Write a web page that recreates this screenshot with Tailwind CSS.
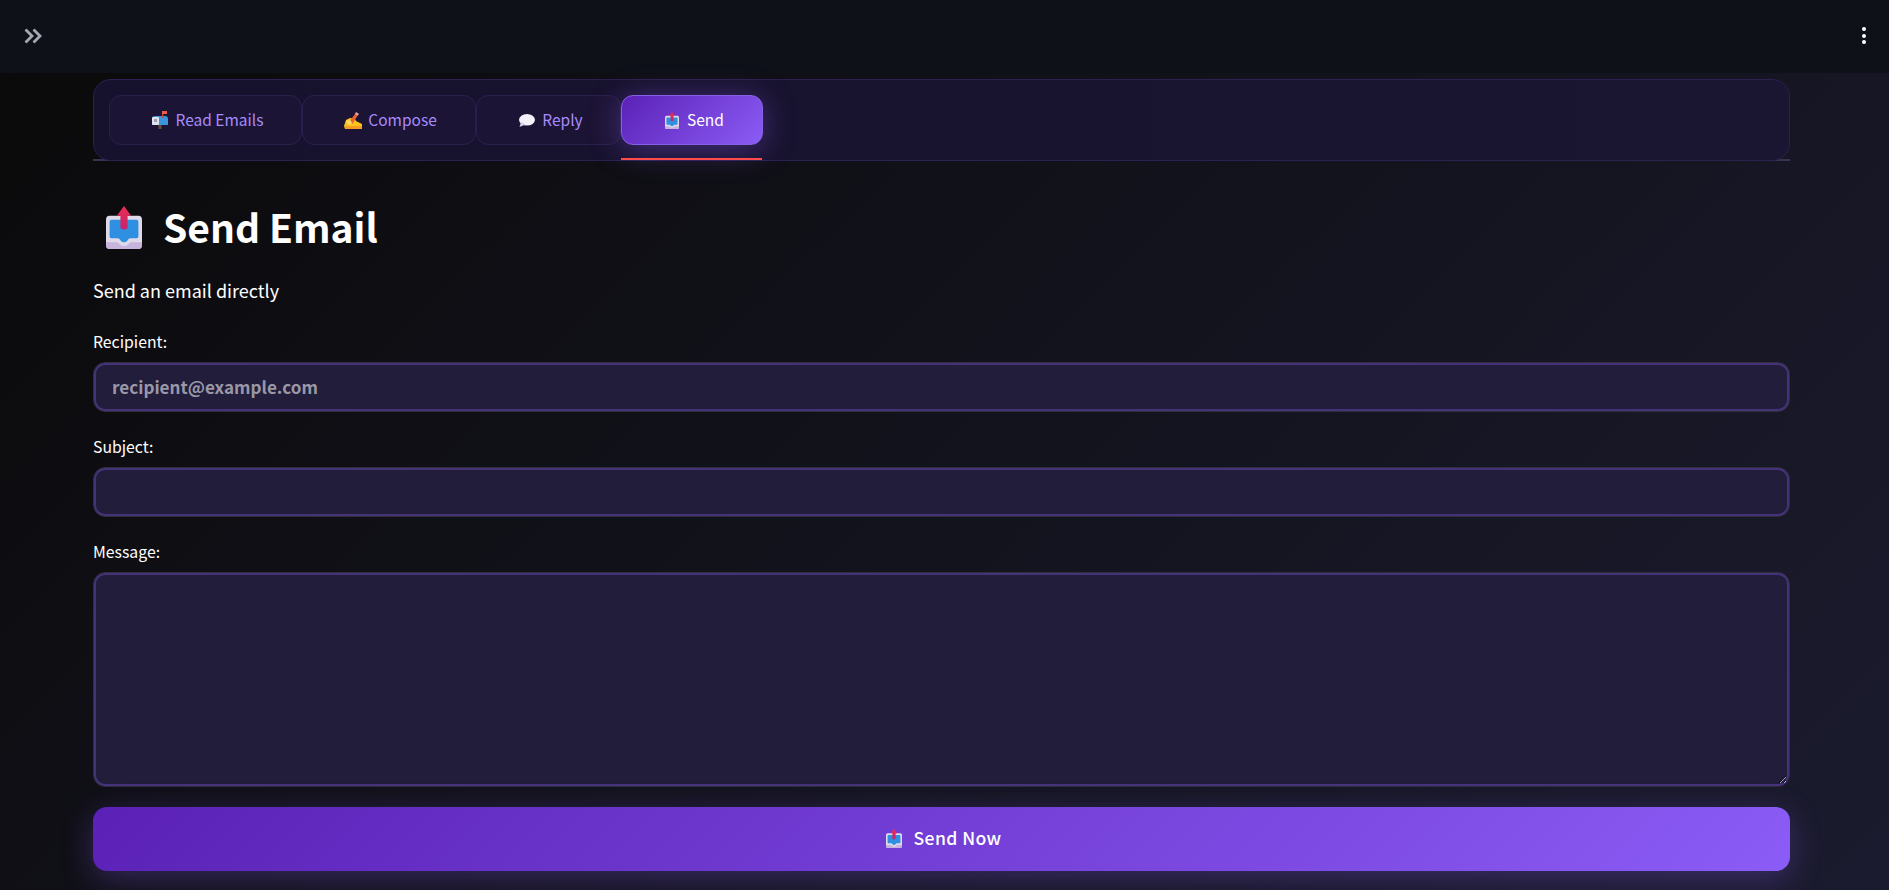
<!DOCTYPE html>
<html lang="en">
<head>
    <meta charset="UTF-8">
    <meta name="viewport" content="width=device-width, initial-scale=1.0">
    <title>Send Email</title>
    <script src="https://cdn.jsdelivr.net/npm/@tailwindcss/browser@4"></script>
</head>
<body class="m-0">
    <svg width="0" height="0" class="absolute">
        <defs>
            <linearGradient id="arrowRed" x1="0" y1="0" x2="0" y2="1">
                <stop offset="0" stop-color="#ee2c50" />
                <stop offset="1" stop-color="#c4246e" />
            </linearGradient>
            <symbol id="outbox" viewBox="0 0 40 44" preserveAspectRatio="none">
                <path d="M0 14q0-4 4-4h32q4 0 4 4v26q0 4-4 4H4q-4 0-4-4z" fill="#dedaea" />
                <path d="M0 37h12q2 0 3 2t5 2 5-2 3-2h12v3q0 4-4 4H4q-4 0-4-4z" fill="#c6b4dc" />
                <path d="M4 16q0-2 2-2h28q2 0 2 2v15q0 2-2 2h-7q-2 0-3 2t-4 2-4-2-3-2H6q-2 0-2-2z" fill="#2f8fe0" />
                <path d="M20 0l8 10h-4v12q0 2-4 2t-4-2V10h-4z" fill="url(#arrowRed)" />
            </symbol>
            <symbol id="mailbox" viewBox="0 0 16 18">
                <rect x="6.500" y="13" width="3" height="5" fill="#6b4a3a" />
                <path d="M3 5h10q3 0 3 3v6H0V8q0-3 3-3z" fill="#3d93dc" />
                <rect x="0" y="6" width="7" height="8" rx="1" fill="#dfe3ec" />
                <rect x="2" y="8" width="3" height="3" fill="#9aa3b5" />
                <rect x="10" y="0" width="1.300" height="7" fill="#c9473d" />
                <rect x="10" y="0" width="5" height="3" fill="#ee5b4a" />
            </symbol>
            <symbol id="hand" viewBox="0 0 18 17">
                <path d="M0 14l2-6 4-2 5 1 1 2 6 3v5H1z" fill="#fcc21b" />
                <path d="M1 14h17v3H1z" fill="#f59a23" />
                <path d="M5 10l6-8 2.500 1.800-5 8z" fill="#e8642f" />
                <path d="M11 2l1-2 3 2-1.500 1.800z" fill="#f5a8a0" />
                <path d="M2 9l4-1 2 3-3 2z" fill="#fddc6a" />
            </symbol>
            <symbol id="bubble" viewBox="0 0 17 13">
                <ellipse cx="9" cy="5.800" rx="8" ry="5.800" fill="#f5f0fa" />
                <path d="M3 8l-1.500 5 6-2.500z" fill="#d9cfe6" />
            </symbol>
        </defs>
    </svg>

    <div class="h-[890px] w-full overflow-hidden bg-linear-[135deg] from-[#0a0a0a] to-[#1b1b2f] text-white font-['Noto_Sans_CJK_SC','Liberation_Sans',sans-serif]">
        <header class="h-[73px] flex items-center justify-between pl-[24px] pr-[23px] pb-[2px] bg-[#0e1118]">
            <svg width="18" height="16" viewBox="0 0 18 16" fill="none" stroke="#a4a9b3" stroke-width="2.800">
                <path d="M1.500 1.500L8 8l-6.500 6.500" />
                <path d="M9.500 1.500L16 8l-6.500 6.500" />
            </svg>
            <div class="flex flex-col gap-[2.500px]">
                <span class="w-[4px] h-[4px] rounded-full bg-white"></span>
                <span class="w-[4px] h-[4px] rounded-full bg-white"></span>
                <span class="w-[4px] h-[4px] rounded-full bg-white"></span>
            </div>
        </header>

        <main class="ml-[93px] w-[1697px] pt-[6px]">
            <!-- tabs -->
            <div class="relative h-[82px] border border-[#2c2150] rounded-[18px] bg-linear-to-r from-[#16112c] to-[#1a1531] pl-[15px] pt-[15px] flex items-start">
                <div class="flex h-[50px] text-[15.500px] text-[#a78bfa]">
                    <div class="w-[193px] pl-[4px] flex items-center justify-center gap-[8px] rounded-[12px] border border-[#2a1f4c] bg-[#1c1434]">
                        <svg class="w-[16px] h-[18px]"><use href="#mailbox" /></svg>Read Emails
                    </div>
                    <div class="w-[174px] pl-[3px] flex items-center justify-center gap-[6px] rounded-[12px] border border-[#2a1f4c] bg-[#1c1434]">
                        <svg class="w-[18px] h-[17px]"><use href="#hand" /></svg>Compose
                    </div>
                    <div class="w-[145px] pl-[4px] flex items-center justify-center gap-[7px] rounded-[12px] border border-[#2a1f4c] bg-[#1c1434]">
                        <svg class="w-[17px] h-[13px]"><use href="#bubble" /></svg>Reply
                    </div>
                    <div class="w-[142px] pl-[5px] flex items-center justify-center gap-[8px] rounded-[12px] border border-[#8661e6] text-white bg-linear-[135deg] from-[#5b21b6] to-[#8b5cf6] shadow-[0_4px_32px_rgba(139,92,246,0.4)]">
                        <svg class="w-[14px] h-[17px]"><use href="#outbox" /></svg>Send
                    </div>
                </div>
                <div class="absolute left-[527px] bottom-0 w-[141px] h-[2px] bg-[#ff4b4b]"></div>
            </div>
            <div class="h-[2px] bg-[#3a3350] -mt-[2px]"></div>

            <!-- heading -->
            <div class="flex items-center pl-[13px] mt-[41px] h-[50px]">
                <svg class="w-[36px] h-[43px]"><use href="#outbox" /></svg>
                <h1 class="ml-[21px] text-[39px] leading-[50px] font-semibold -translate-y-[1px]">Send Email</h1>
            </div>
            <p class="mt-[24px] text-[18px] leading-[28px]">Send an email directly</p>

            <!-- form -->
            <label class="block mt-[27px] text-[15.800px] leading-[22px]">Recipient:</label>
            <div class="mt-[9px] h-[50px] rounded-[12px] border border-[#2f2e3a]">
                <input class="block w-full h-full px-[16px] pb-[2px] rounded-[11px] border-2 border-[#45337a] bg-[#221d3b] text-[17.100px] font-semibold outline-none placeholder:text-[#9a98a6]" placeholder="recipient@example.com">
            </div>

            <label class="block mt-[24px] text-[15.800px] leading-[22px]">Subject:</label>
            <div class="mt-[9px] h-[50px] rounded-[12px] border border-[#2f2e3a]">
                <input class="block w-full h-full px-[16px] pb-[2px] rounded-[11px] border-2 border-[#45337a] bg-[#221d3b] text-[17.100px] outline-none">
            </div>

            <label class="block mt-[24px] text-[15.800px] leading-[22px]">Message:</label>
            <div class="mt-[9px] h-[215px] rounded-[12px] border border-[#2f2e3a]">
                <textarea class="block w-full h-full px-[16px] py-[12px] rounded-[11px] border-2 border-[#45337a] bg-[#221d3b] text-[17.100px] outline-none"></textarea>
            </div>

            <button class="mt-[20px] w-full h-[64px] pl-[5px] pb-[2px] flex items-center justify-center gap-[11px] rounded-[14px] bg-linear-[135deg] from-[#5b21b6] to-[#8b5cf6] text-[17.600px] font-medium tracking-[0.4px] shadow-[0_8px_32px_rgba(139,92,246,0.3)]">
                <svg class="w-[16px] h-[19px]"><use href="#outbox" /></svg>Send Now
            </button>
        </main>
    </div>
</body>
</html>
